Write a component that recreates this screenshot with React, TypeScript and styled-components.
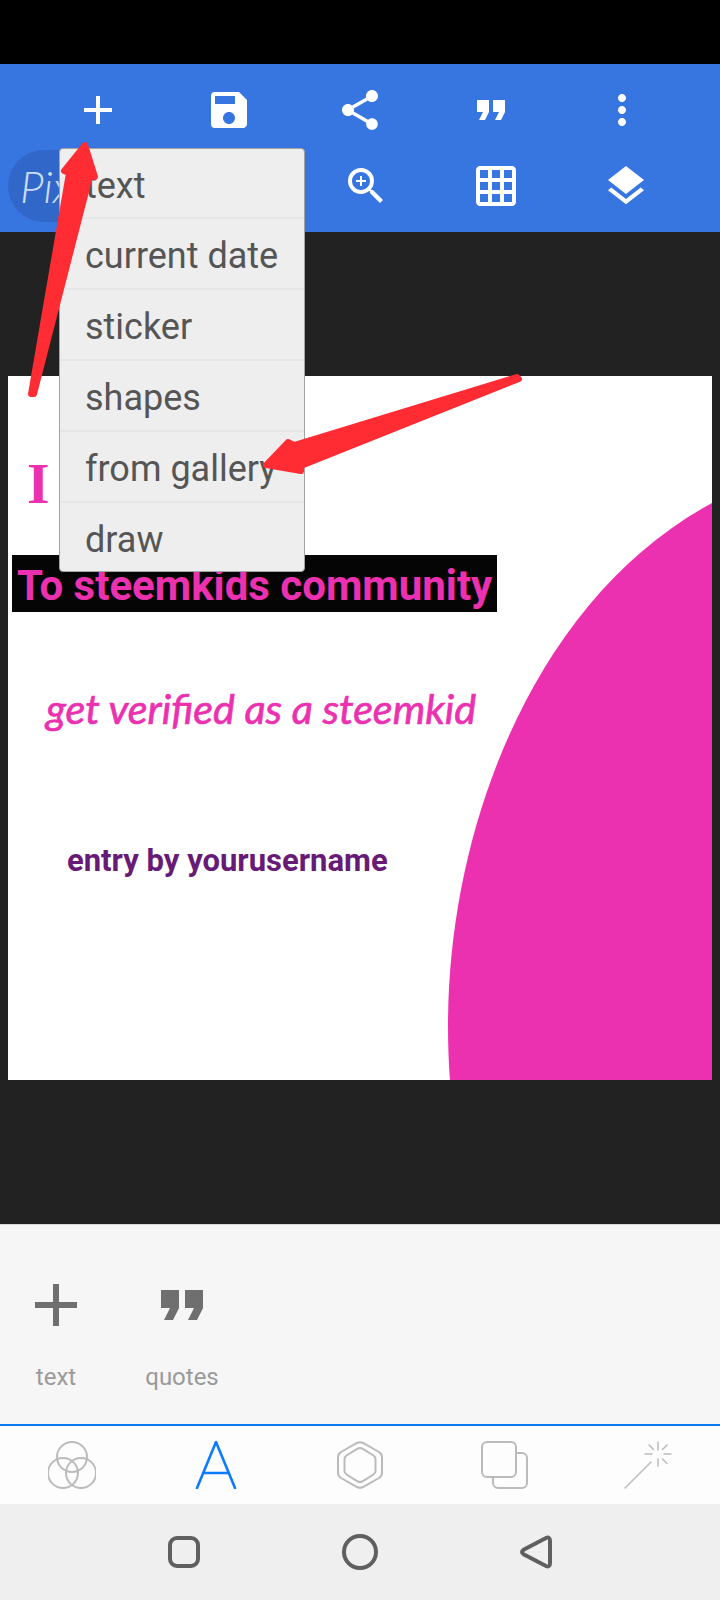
import React from "react";
import styled, { createGlobalStyle } from "styled-components";
import { MdAdd, MdSave, MdShare, MdFormatQuote, MdMoreVert, MdZoomIn, MdGridOn, MdLayers } from "react-icons/md";

const Global = createGlobalStyle`
  html, body { margin: 0; padding: 0; background: #000; }
  * { box-sizing: border-box; }
`;

const Screen = styled.div`
  position: relative;
  width: 720px;
  height: 1600px;
  overflow: hidden;
  display: flex;
  flex-direction: column;
  font-family: Roboto, "Liberation Sans", sans-serif;
`;
const StatusBar = styled.div`
  height: 64px;
  background: #000;
`;
const Toolbar = styled.header`
  height: 168px;
  background: #3776e0;
  color: #fff;
  display: flex;
  flex-direction: column;
`;
const TopRow = styled.div`
  display: grid;
  grid-template-columns: repeat(5, 131px);
  justify-items: center;
  align-items: center;
  padding: 6px 0 0 32px;
  height: 86px;
`;
const SecondRow = styled.div`
  display: flex;
  align-items: center;
  height: 72px;
  padding-left: 8px;
`;
const LogoPill = styled.div`
  width: 200px;
  height: 72px;
  border-radius: 36px;
  background: #3067c9;
  color: #cbdcf6;
  font-family: Lato, sans-serif;
  font-style: italic;
  font-weight: 300;
  font-size: 44px;
  line-height: 72px;
  padding-left: 12px;
`;
const RowIcons = styled.div`
  display: grid;
  grid-template-columns: repeat(3, 130px);
  justify-items: center;
  margin-left: 93px;
`;
const Stage = styled.main`
  flex: 1;
  background: #222;
  padding: 144px 8px 0;
`;
const Canvas = styled.section`
  position: relative;
  width: 704px;
  height: 704px;
  background: #fff;
  overflow: hidden;
`;
const PinkShape = styled.svg`
  position: absolute;
  left: 0;
  top: 0;
`;
const Heading = styled.div`
  position: absolute;
  left: 19px;
  top: 73px;
  font-family: "Liberation Serif", serif;
  font-weight: 700;
  font-size: 58px;
  line-height: 70px;
  word-spacing: -4px;
  color: #eb31b0;
  white-space: nowrap;
`;
const Banner = styled.div`
  position: absolute;
  left: 4px;
  top: 179px;
  width: 485px;
  height: 57px;
  background: #050505;
  color: #eb31b0;
  font-weight: 700;
  font-size: 42px;
  line-height: 62px;
  padding-left: 5px;
  white-space: nowrap;
`;
const Verified = styled.div`
  position: absolute;
  left: 38px;
  top: 302px;
  font-family: Lato, sans-serif;
  font-style: italic;
  font-weight: 400;
  font-size: 41.3px;
  line-height: 60px;
  -webkit-text-stroke: 0.7px #eb31b0;
  color: #eb31b0;
  white-space: nowrap;
`;
const Entry = styled.div`
  position: absolute;
  left: 59px;
  top: 465px;
  font-weight: 700;
  font-size: 31px;
  line-height: 40px;
  color: #671a76;
  white-space: nowrap;
`;
const Panel = styled.section`
  height: 200px;
  background: #f6f6f6;
  border-top: 1px solid #d8d8d8;
  display: flex;
  gap: 54px;
  padding: 44px 0 0 20px;
`;
const Tool = styled.div`
  width: 72px;
  display: flex;
  flex-direction: column;
  align-items: center;
  color: #6f6f6f;
`;
const ToolLabel = styled.span`
  margin-top: 22px;
  font-size: 24px;
  line-height: 28px;
  color: #9a9a9a;
`;
const TabBar = styled.nav`
  height: 80px;
  background: #fdfdfd;
  border-top: 2px solid #0a7cf5;
  display: grid;
  grid-template-columns: repeat(5, 144px);
  justify-items: center;
  align-items: center;
`;
const NavBar = styled.nav`
  height: 96px;
  background: #efefef;
  display: grid;
  grid-template-columns: repeat(3, 176px);
  justify-content: center;
  justify-items: center;
  align-items: center;
`;
const Menu = styled.ul`
  position: absolute;
  left: 59px;
  top: 148px;
  width: 246px;
  height: 424px;
  margin: 0;
  padding: 0;
  list-style: none;
  background: #eeeeee;
  border: 1px solid #a3a3a3;
  border-radius: 4px;
`;
const MenuItem = styled.li`
  height: 71px;
  padding-left: 25px;
  font-size: 36px;
  line-height: 74px;
  color: #555;
  white-space: nowrap;
  border-bottom: 2px solid #e6e6e6;
  &:first-child { height: 70px; }
  &:last-child { border-bottom: 0; }
`;
const Arrows = styled.svg`
  position: absolute;
  left: 0;
  top: 0;
  pointer-events: none;
`;

const Faint = { fill: "none", stroke: "#bbb", strokeWidth: 2 } as const;

export default function App() {
  return (
    <Screen>
      <Global />
      <StatusBar />
      <Toolbar>
        <TopRow>
          <MdAdd size={48} />
          <MdSave size={48} />
          <MdShare size={48} />
          <MdFormatQuote size={48} />
          <MdMoreVert size={48} />
        </TopRow>
        <SecondRow>
          <LogoPill>Pix</LogoPill>
          <RowIcons>
            <MdZoomIn size={48} />
            <MdGridOn size={48} />
            <MdLayers size={48} />
          </RowIcons>
        </SecondRow>
      </Toolbar>
      <Stage>
        <Canvas>
          <PinkShape width="704" height="704" viewBox="0 0 704 704">
            <path d="M704 127 C528 222 440 449 440 649 Q440 680 442 704 H704 Z" fill="#eb31b0" />
          </PinkShape>
          <Heading>I am</Heading>
          <Banner>To steemkids community</Banner>
          <Verified>get verified as a steemkid</Verified>
          <Entry>entry by yourusername</Entry>
        </Canvas>
      </Stage>
      <Panel>
        <Tool>
          <MdAdd size={72} />
          <ToolLabel>text</ToolLabel>
        </Tool>
        <Tool>
          <MdFormatQuote size={72} />
          <ToolLabel>quotes</ToolLabel>
        </Tool>
      </Panel>
      <TabBar>
        <svg width="48" height="48" viewBox="0 0 48 48">
          <g {...Faint}>
            <circle cx="24" cy="16" r="15" />
            <circle cx="15" cy="32" r="15" />
            <circle cx="33" cy="32" r="15" />
          </g>
        </svg>
        <svg width="48" height="48" viewBox="0 0 48 48">
          <path d="M5 47 L24 1 L43 47 M11 32 H37" fill="none" stroke="#0a7aff" strokeWidth="2.6" strokeLinecap="round" strokeLinejoin="round" />
        </svg>
        <svg width="48" height="48" viewBox="0 0 48 48">
          <g {...Faint}>
            <path d="M21 2 Q24 0.5 27 2 L43 11 Q46 13 46 16 V32 Q46 35 43 37 L27 46 Q24 47.5 21 46 L5 37 Q2 35 2 32 V16 Q2 13 5 11 Z" />
            <path d="M22 7.5 Q24 6.5 26 7.5 L37.5 14.5 Q39.5 16 39.5 18 V30 Q39.5 32 37.5 33.5 L26 40.5 Q24 41.5 22 40.5 L10.5 33.5 Q8.5 32 8.5 30 V18 Q8.5 16 10.5 14.5 Z" />
          </g>
        </svg>
        <svg width="48" height="48" viewBox="0 0 48 48">
          <rect x="13" y="12" width="34" height="35" rx="5" fill="none" stroke="#bbb" strokeWidth="2" />
          <rect x="2" y="1" width="34" height="35" rx="5" fill="#fdfdfd" stroke="#bbb" strokeWidth="2" />
        </svg>
        <svg width="48" height="48" viewBox="0 0 48 48">
          <g fill="none" stroke="#bbb" strokeWidth="1.5" strokeLinecap="round">
            <path d="M1 47 L27 21" />
            <path d="M34 1 V9 M34 18 V25 M21 13 H28 M40 13 H47 M25 4 L29.5 8.5 M43 4 L38.5 8.5 M38.5 18 L43 22.5" />
          </g>
        </svg>
      </TabBar>
      <NavBar>
        <svg width="40" height="40" viewBox="0 0 40 40">
          <rect x="6" y="6" width="28" height="28" rx="7" fill="none" stroke="#5f5f5f" strokeWidth="4" />
        </svg>
        <svg width="40" height="40" viewBox="0 0 40 40">
          <circle cx="20" cy="20" r="16" fill="none" stroke="#5f5f5f" strokeWidth="4" />
        </svg>
        <svg width="40" height="40" viewBox="0 0 40 40">
          <path d="M8 17.5 L30 6 Q34 4.5 34 9 V31 Q34 35.5 30 34 L8 22.5 Q4 20 8 17.5 Z" fill="none" stroke="#5f5f5f" strokeWidth="4" strokeLinejoin="round" />
        </svg>
      </NavBar>
      <Menu>
        <MenuItem>text</MenuItem>
        <MenuItem>current date</MenuItem>
        <MenuItem>sticker</MenuItem>
        <MenuItem>shapes</MenuItem>
        <MenuItem>from gallery</MenuItem>
        <MenuItem>draw</MenuItem>
      </Menu>
      <Arrows width="720" height="1600" viewBox="0 0 720 1600">
        <g fill="#ff2c33" stroke="#ff2c33" strokeWidth="6" strokeLinejoin="round">
          <path d="M85 145 L64 171 L69 173 L31 394 L34 394 L90 176 L95 177 Z" />
          <path d="M517 377 L294 445 L288 442 L266 465 L301 471 L301 466 L519 379 Z" />
        </g>
      </Arrows>
    </Screen>
  );
}
